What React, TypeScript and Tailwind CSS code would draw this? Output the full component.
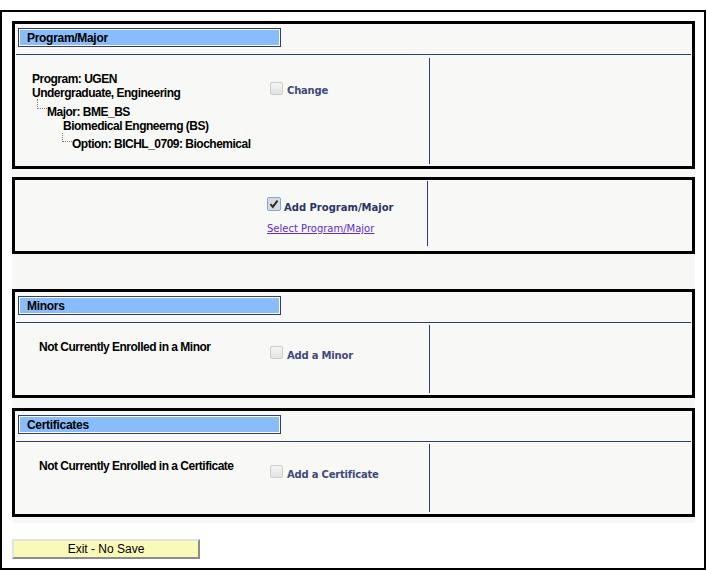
import React from "react";

const BLANK_BOX = () => (
  <span className="block w-[13px] h-[13px] shrink-0 rounded-[2px] border border-[#cdcdcd] bg-linear-to-b from-[#f5f5f5] to-[#e3e3e3]" />
);

const CHECKED_BOX = () => (
  <span className="flex w-[14px] h-[14px] shrink-0 items-center justify-center rounded-[2px] border border-[#7ea5e6] bg-[#dadada]">
    <svg width="10" height="10" viewBox="0 0 10 10">
      <path d="M1.5 5.2 L3.8 7.8 L8.5 1.6" stroke="#2b2b2b" strokeWidth="2" fill="none" />
    </svg>
  </span>
);

const SECTION_HEADER = ({ title }: { title: string }) => (
  <>
    <div className="pt-[4px] pl-[3px]">
      <div className="w-[263px] h-[19px] border border-[#2f3d74] bg-white p-px">
        <div className="h-full bg-[#88bcfa] pl-[7px] text-[12px] leading-[16px] font-bold tracking-[-0.3px] text-black">
          {title}
        </div>
      </div>
    </div>
    <div className="mt-[7px] mx-px h-px bg-[#2f3d74]" />
  </>
);

const OPTION_LABEL = ({ text, dark }: { text: string; dark?: boolean }) => (
  <div
    className={
      dark
        ? "font-['DejaVu_Sans',sans-serif] text-[10px] leading-[12px] font-bold text-[#2b3466]"
        : "font-['DejaVu_Sans',sans-serif] text-[10px] leading-[12px] font-bold text-[#414a78] tracking-[-0.2px]"
    }
  >
    {text}
  </div>
);

const EMPTY_SECTION = ({ title, message, action }: { title: string; message: string; action: string }) => (
  <div className="h-[109px] border-[3px] border-black bg-[#f8f8f6]">
    <SECTION_HEADER title={title} />
    <div className="flex h-[72px]">
      <div className="w-[253px] pl-[24px] pt-[17px] text-[12px] leading-[14px] font-bold tracking-[-0.5px] text-black">
        {message}
      </div>
      <div className="w-[161px] pt-[23px] flex items-start">
        <div className="ml-[2px]">
          <BLANK_BOX />
        </div>
        <div className="ml-[4px] mt-[4px]">
          <OPTION_LABEL text={action} />
        </div>
      </div>
      <div className="w-px bg-[#2f3d74] mt-[2px] mb-[2px]" />
      <div className="flex-1" />
    </div>
  </div>
);

export default function App() {
  return (
    <div className="font-['Liberation_Sans',Arial,sans-serif] bg-white">
      <div className="mt-[10px] w-[706px] h-[560px] border-2 border-black pt-[9px] pl-[10px]">
        <div className="w-[683px] bg-[#f7f7f5] pb-[6px]">
          {/* program / major */}
          <div className="h-[148px] border-[3px] border-black bg-[#f8f8f6]">
            <SECTION_HEADER title="Program/Major" />
            <div className="flex h-[111px]">
              <div className="w-[253px] pl-[17px] pt-[17px] text-[12px] leading-[14px] font-bold tracking-[-0.5px] text-black">
                <div>Program: UGEN</div>
                <div>Undergraduate, Engineering</div>
                <div className="flex items-start mt-[5px] ml-[5px]">
                  <span className="w-[10px] h-[10px] -mt-[6px] shrink-0 border-l border-b border-dotted border-[#7b7b7b]" />
                  <span>Major: BME_BS</span>
                </div>
                <div className="ml-[31px]">Biomedical Engneerng (BS)</div>
                <div className="flex items-start mt-[4px] ml-[30px]">
                  <span className="w-[10px] h-[9px] -mt-[4px] shrink-0 border-l border-b border-dotted border-[#7b7b7b]" />
                  <span>Option: BICHL_0709: Biochemical</span>
                </div>
              </div>
              <div className="w-[161px] pt-[27px] flex items-start">
                <div className="ml-[2px]">
                  <BLANK_BOX />
                </div>
                <div className="ml-[4px] mt-[3px]">
                  <OPTION_LABEL text="Change" />
                </div>
              </div>
              <div className="w-px bg-[#2f3d74] mt-[3px] mb-[2px]" />
              <div className="flex-1" />
            </div>
          </div>

          {/* add program */}
          <div className="mt-[8px] h-[77px] border-[3px] border-black bg-[#f8f8f6]">
            <div className="flex h-[71px]">
              <div className="w-[252px]" />
              <div className="w-[160px] pt-[17px]">
                <div className="flex items-start">
                  <CHECKED_BOX />
                  <div className="ml-[3px] mt-[5px]">
                    <OPTION_LABEL text="Add Program/Major" dark />
                  </div>
                </div>
                <div className="mt-[9px] font-['DejaVu_Sans',sans-serif] text-[10px] leading-[12px] text-[#5f2fd3] underline">
                  Select Program/Major
                </div>
              </div>
              <div className="w-px bg-[#2f3d74] mt-px mb-[5px]" />
              <div className="flex-1" />
            </div>
          </div>

          <div className="mt-[35px]">
            <EMPTY_SECTION title="Minors" message="Not Currently Enrolled in a Minor" action="Add a Minor" />
          </div>
          <div className="mt-[10px]">
            <EMPTY_SECTION
              title="Certificates"
              message="Not Currently Enrolled in a Certificate"
              action="Add a Certificate"
            />
          </div>
        </div>

        <button className="mt-[16px] block w-[188px] h-[20px] border-2 border-t-[#e2e2e2] border-l-[#e2e2e2] border-r-[#8c8c8c] border-b-[#8c8c8c] bg-[#f9f9b8] text-[12px] leading-[14px] text-black">
          Exit - No Save
        </button>
      </div>
    </div>
  );
}
